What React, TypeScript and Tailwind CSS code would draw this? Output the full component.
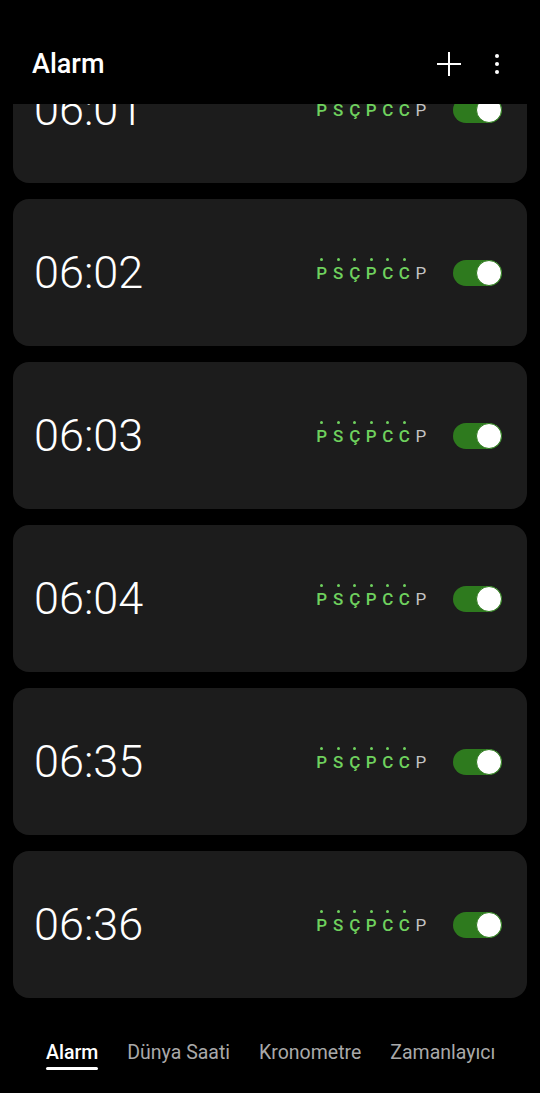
import React from "react";

const alarms = ["06:01", "06:02", "06:03", "06:04", "06:35", "06:36"];
const days = ["P", "S", "Ç", "P", "C", "C", "P"];

function Toggle() {
  return (
    <div className="relative h-[26px] w-[49px] rounded-full bg-[#2e7a1e]">
      <div className="absolute right-0 top-0 h-[26px] w-[26px] rounded-full border-[1.5px] border-[#2e7a1e] bg-white" />
    </div>
  );
}

function Days() {
  return (
    <div className="flex items-end">
      {days.map((d, i) => (
        <div key={i} className="flex w-[16.5px] flex-col items-center">
          <span className={`h-[3px] w-[3px] rounded-full ${i < 6 ? "bg-[#6fd15e]" : "bg-transparent"}`} />
          <span
            className={`mt-[2px] text-[17px] leading-[20px] ${i < 6 ? "font-medium text-[#6fd15e]" : "text-[#c4c4c4]"}`}
          >
            {d}
          </span>
        </div>
      ))}
    </div>
  );
}

function AlarmCard({ time }: { time: string }) {
  return (
    <div className="flex h-[147px] items-center rounded-[16px] bg-[#1c1c1c] pl-[21px] pr-[25px]">
      <span className="text-[45px] font-light leading-none text-white">{time}</span>
      <div className="ml-auto flex items-center gap-[24px]">
        <div className="-mt-[4px]">
          <Days />
        </div>
        <Toggle />
      </div>
    </div>
  );
}

export default function App() {
  return (
    <div
      className="flex h-[1093px] w-[540px] flex-col overflow-hidden bg-black text-white"
      style={{ fontFamily: "Roboto, 'Noto Sans', sans-serif" }}
    >
      <header className="relative z-10 flex h-[104px] shrink-0 items-center bg-black pl-[32px] pr-[41px] pt-[24px]">
        <h1 className="text-[27px] font-medium leading-none">Alarm</h1>
        <div className="ml-auto flex items-center gap-[33px]">
          <svg width="26" height="26" viewBox="0 0 26 26" className="text-white">
            <path d="M13 1v24M1 13h24" stroke="currentColor" strokeWidth="2" />
          </svg>
          <div className="flex flex-col items-center gap-[4px]">
            <span className="h-[4px] w-[4px] rounded-full bg-white" />
            <span className="h-[4px] w-[4px] rounded-full bg-white" />
            <span className="h-[4px] w-[4px] rounded-full bg-white" />
          </div>
        </div>
      </header>

      <main className="h-[906px] shrink-0 overflow-hidden px-[13px]">
        <div className="-mt-[68px] flex flex-col gap-[16px]">
          {alarms.map((t) => (
            <AlarmCard key={t} time={t} />
          ))}
        </div>
      </main>

      <nav className="flex flex-1 items-start gap-[29px] pl-[46px] pt-[32px] text-[19.5px] text-[#a9a9a9]">
        <div className="flex flex-col">
          <span className="font-medium leading-[22px] text-white">Alarm</span>
          <span className="mt-[3px] h-[3px] rounded-full bg-white" />
        </div>
        <span className="leading-[22px]">Dünya Saati</span>
        <span className="leading-[22px]">Kronometre</span>
        <span className="leading-[22px]">Zamanlayıcı</span>
      </nav>
    </div>
  );
}
